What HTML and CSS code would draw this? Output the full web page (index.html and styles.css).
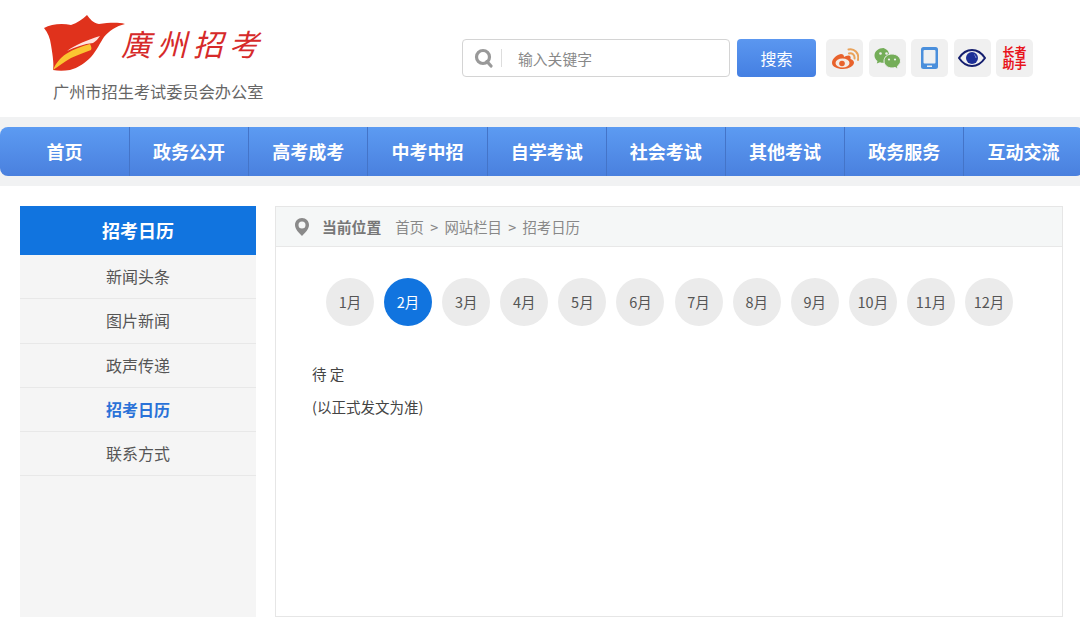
FILE: index.html
```html
<!DOCTYPE html>
<html lang="zh">
<head>
<meta charset="utf-8">
<title>招考日历</title>
<link rel="stylesheet" href="styles.css">
</head>
<body>
<header class="header">
  <div class="brand">
    <div class="brand-top">
      <svg class="flower" width="82" height="62" viewBox="0 0 82 62">
        <path d="M0 15C7 11 18 10 27 12C33 10 39 6 43 2C46 6 49 10 55 11C64 10 73 9 81 11C72 13 65 18 60 24C56 30 53 37 47 44C41 50 34 55 26 57C20 58 14 58 9 57C10 52 9 44 7 32C6 25 4 20 0 15Z" fill="#e0321c"/>
        <path d="M9 57C12 50 16 45 22 41C30 36 38 33 46 31C47 33 48 35 47 37C40 40 33 42 27 45C20 49 15 53 9 57Z" fill="#fbc531"/>
        <path d="M23 38C31 32 43 27 56 23C54 26 52 28 49 30C40 31 31 34 23 38Z" fill="#ffe3de"/>
      </svg>
      <span class="brand-name">廣州招考</span>
    </div>
    <div class="brand-sub">广州市招生考试委员会办公室</div>
  </div>
  <div class="tools">
    <div class="search">
      <svg class="search-icon" width="20" height="20" viewBox="0 0 20 20"><circle cx="9" cy="9" r="6.5" fill="none" stroke="#999" stroke-width="3.200"/><path d="M13 13.500L17 18" stroke="#999" stroke-width="3.200" stroke-linecap="round"/></svg>
      <span class="search-sep"></span>
      <span class="search-text">输入关键字</span>
    </div>
    <div class="search-btn">搜索</div>
    <div class="icons">
      <div class="icon-box">
        <svg width="28" height="21" viewBox="0 0 28 21">
          <path d="M10 6C5 7 1 11 1 15C1 18.500 6 21 12 21C18 21 23 18 23 14.500C23 12.500 21 11.500 19.500 11C20 9 19.500 7.500 17.500 7.500C16 7.500 14 8.500 13 9C13 7 12 6 10 6Z" fill="#e8622c"/>
          <ellipse cx="11.500" cy="15" rx="7" ry="4.500" fill="#f4ebe4"/>
          <circle cx="11" cy="15.500" r="2.800" fill="#e8622c"/>
          <path d="M18 5.500C21 4.500 24 7 23.500 10.500M17.500 1.500C23 0 28.500 5 27 12" fill="none" stroke="#e9a25a" stroke-width="2" stroke-linecap="round"/>
        </svg>
      </div>
      <div class="icon-box">
        <svg width="27" height="21" viewBox="0 0 27 21">
          <path d="M9.500 0C4.500 0 0.500 3.200 0.500 7.500C0.500 9.800 1.700 11.700 3.500 13L2.800 15.500L6 14.300C7.200 14.700 8.500 14.900 9.800 14.800C15 13 18.500 3 9.500 0Z" fill="#74ad58"/>
          <path d="M18 6C13.500 6 10 9 10 13C10 17 13.500 20 18 20C19 20 20 19.800 21 19.500L24 21L23.400 18.200C25.300 16.800 26.500 15 26.500 13C26.500 9 22.500 6 18 6Z" fill="#74ad58" stroke="#eee" stroke-width="1"/>
          <circle cx="6.500" cy="5.500" r="1.300" fill="#eee"/><circle cx="12.500" cy="5.500" r="1.300" fill="#eee"/>
          <circle cx="15" cy="11.500" r="1.100" fill="#eee"/><circle cx="21" cy="11.500" r="1.100" fill="#eee"/>
        </svg>
      </div>
      <div class="icon-box">
        <svg width="17" height="22" viewBox="0 0 17 22">
          <rect x="0" y="0" width="17" height="22" rx="2.500" fill="#4a8fdc"/>
          <rect x="2.500" y="3" width="12" height="13.500" rx="1" fill="#eef0f2"/>
          <rect x="6" y="18.500" width="5" height="1.500" fill="#eef0f2"/>
        </svg>
      </div>
      <div class="icon-box">
        <svg width="28" height="18" viewBox="0 0 28 18">
          <path d="M1 9C5 3 9 1 14 1C19 1 23 3 27 9C23 15 19 17 14 17C9 17 5 15 1 9Z" fill="none" stroke="#141e6e" stroke-width="2"/>
          <circle cx="14" cy="9" r="6" fill="#1c2f96"/>
          <path d="M16 5.500A4 4 0 0 1 18 9" fill="none" stroke="#7f8fd0" stroke-width="1"/>
        </svg>
      </div>
      <div class="icon-box elder">长者<br>助手</div>
    </div>
  </div>
</header>
<div class="nav-band">
  <nav class="nav">
    <a class="nav-item">首页</a>
    <a class="nav-item">政务公开</a>
    <a class="nav-item">高考成考</a>
    <a class="nav-item">中考中招</a>
    <a class="nav-item">自学考试</a>
    <a class="nav-item">社会考试</a>
    <a class="nav-item">其他考试</a>
    <a class="nav-item">政务服务</a>
    <a class="nav-item">互动交流</a>
  </nav>
</div>
<main class="main">
  <aside class="side">
    <div class="side-title">招考日历</div>
    <div class="side-item">新闻头条</div>
    <div class="side-item">图片新闻</div>
    <div class="side-item">政声传递</div>
    <div class="side-item active">招考日历</div>
    <div class="side-item">联系方式</div>
  </aside>
  <section class="panel">
    <div class="crumb">
      <svg width="14" height="18" viewBox="0 0 14 18"><path fill-rule="evenodd" d="M7 0C3 0 0 3 0 7C0 11 4 15 7 18C10 15 14 11 14 7C14 3 11 0 7 0ZM7 3.500A3.500 3.500 0 1 1 7 10.500A3.500 3.500 0 1 1 7 3.500Z" fill="#8a8a8a"/></svg>
      <strong class="crumb-label">当前位置</strong>
      <span class="crumb-path">首页 &gt; 网站栏目 &gt; 招考日历</span>
    </div>
    <div class="months">
      <span class="month">1月</span>
      <span class="month current">2月</span>
      <span class="month">3月</span>
      <span class="month">4月</span>
      <span class="month">5月</span>
      <span class="month">6月</span>
      <span class="month">7月</span>
      <span class="month">8月</span>
      <span class="month">9月</span>
      <span class="month">10月</span>
      <span class="month">11月</span>
      <span class="month">12月</span>
    </div>
    <div class="content">
      <p class="pending">待 定</p>
      <p class="note">(以正式发文为准)</p>
    </div>
  </section>
</main>
</body>
</html>
```
FILE: styles.css
```css
* { box-sizing: border-box; }
html, body { margin: 0; padding: 0; }
body {
  width: 1080px;
  height: 624px;
  overflow: hidden;
  background: #fff;
  font-family: "Noto Sans CJK SC", "Liberation Sans", sans-serif;
  color: #444;
}
.header {
  height: 117px;
  display: flex;
  align-items: flex-start;
}
.brand {
  width: 462px;
  padding: 13px 0 0 44px;
}
.brand-top {
  display: flex;
  align-items: flex-start;
  height: 62px;
}
.flower { flex: none; }
.brand-name {
  margin: 8px 0 0 -5px;
  font-size: 30px;
  line-height: 44px;
  letter-spacing: 6px;
  color: #d62a2a;
  font-style: italic;
  white-space: nowrap;
}
.brand-sub {
  margin: 4px 0 0 9px;
  font-size: 16.200px;
  line-height: 24px;
  color: #666;
  white-space: nowrap;
}
.tools {
  display: flex;
  align-items: flex-start;
  padding-top: 39px;
}
.search {
  width: 268px;
  height: 38px;
  border: 1px solid #d4d4d4;
  border-radius: 4px;
  display: flex;
  align-items: center;
  padding-left: 11px;
}
.search-sep {
  width: 1px;
  height: 18px;
  background: #ddd;
  margin-left: 7px;
}
.search-text {
  margin-left: 16px;
  font-size: 14.800px;
  color: #888;
}
.search-btn {
  width: 79px;
  height: 38px;
  margin-left: 7px;
  border-radius: 4px;
  background: linear-gradient(#5b97f0, #447fe2);
  color: #fff;
  font-size: 16px;
  line-height: 39px;
  text-align: center;
}
.icons {
  display: flex;
  gap: 5.500px;
  margin-left: 10px;
}
.icon-box {
  width: 37px;
  height: 38px;
  border-radius: 5px;
  background: #f0f0f0;
  display: flex;
  align-items: center;
  justify-content: center;
}
.elder {
  color: #e8141c;
  font-size: 12px;
  font-weight: 700;
  line-height: 12.500px;
  text-align: center;
}
.nav-band {
  height: 69px;
  padding: 10px 0;
  background: #f1f2f3;
}
.nav {
  width: 1084px;
  height: 49px;
  display: grid;
  grid-template-columns: 130px repeat(8, 119.200px);
  border-radius: 8px;
  background: linear-gradient(#5c9bf2, #4a80de);
}
.nav-item {
  border-right: 1px solid #4474c8;
  color: #fff;
  font-size: 18px;
  font-weight: 700;
  line-height: 49px;
  text-align: center;
  white-space: nowrap;
}
.main {
  display: flex;
  align-items: stretch;
  gap: 19px;
  height: 411px;
  margin: 20px 17px 0 20px;
}
.side {
  width: 236px;
  flex: none;
  background: #f5f5f5;
}
.side-title {
  height: 49px;
  background: #1174df;
  color: #fff;
  font-size: 18px;
  font-weight: 700;
  line-height: 49px;
  text-align: center;
}
.side-item {
  height: 44.300px;
  border-bottom: 1px solid #e8e8e8;
  font-size: 16px;
  line-height: 43px;
  text-align: center;
  color: #555;
}
.side-item.active {
  color: #2a72d8;
  font-weight: 700;
}
.panel {
  flex: 1;
  border: 1px solid #e6e6e6;
}
.crumb {
  height: 40px;
  padding-left: 19px;
  display: flex;
  align-items: center;
  background: #f5f7f7;
  border-bottom: 1px solid #e8e8e8;
  font-size: 14.400px;
  color: #888;
}
.crumb-label {
  margin-left: 13px;
  font-size: 14.800px;
  color: #777;
}
.crumb-path {
  margin-left: 14px;
  word-spacing: 3px;
}
.months {
  display: flex;
  gap: 10.100px;
  padding: 31px 0 0 50px;
}
.month {
  width: 48px;
  height: 48px;
  border-radius: 50%;
  background: #ebebeb;
  color: #555;
  font-size: 14.500px;
  line-height: 48px;
  text-align: center;
  white-space: nowrap;
}
.month.current {
  background: #1174df;
  color: #fff;
}
.content {
  padding: 36px 0 0 36px;
  font-size: 14.500px;
  color: #444;
}
.pending {
  margin: 0;
  line-height: 24px;
}
.note {
  margin: 9px 0 0;
  line-height: 24px;
}
```
